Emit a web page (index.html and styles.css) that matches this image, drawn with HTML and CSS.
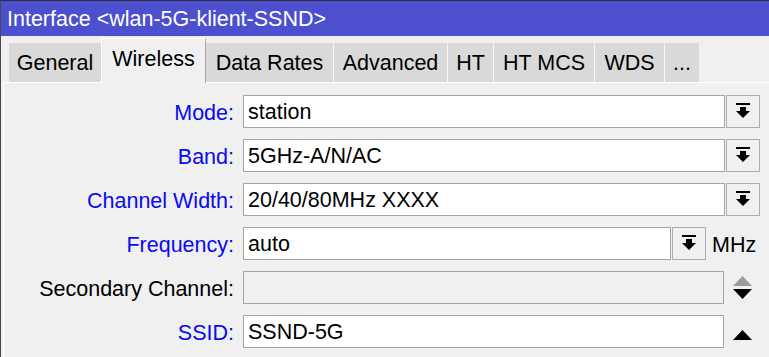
FILE: index.html
```html
<!DOCTYPE html>
<html>
<head>
<meta charset="utf-8">
<link rel="stylesheet" href="styles.css">
</head>
<body>
<div class="window">
  <div class="titlebar">Interface &lt;wlan-5G-klient-SSND&gt;</div>
  <div class="tabs">
    <div class="tab t-general">General</div>
    <div class="tab active t-wireless">Wireless</div>
    <div class="tab t-rates">Data Rates</div>
    <div class="tab t-adv">Advanced</div>
    <div class="tab t-ht">HT</div>
    <div class="tab t-mcs">HT MCS</div>
    <div class="tab t-wds">WDS</div>
    <div class="tab t-more">...</div>
  </div>
  <div class="panel">
    <div class="row">
      <div class="label req">Mode:</div>
      <div class="field">station</div>
      <div class="btn"><svg class="dd" width="14" height="15" viewBox="0 0 14 15"><rect x="0" y="0" width="14" height="2"/><rect x="4" y="4" width="6" height="4"/><polygon points="0,8 14,8 7,15"/></svg></div>
    </div>
    <div class="row">
      <div class="label req">Band:</div>
      <div class="field">5GHz-A/N/AC</div>
      <div class="btn"><svg class="dd" width="14" height="15" viewBox="0 0 14 15"><rect x="0" y="0" width="14" height="2"/><rect x="4" y="4" width="6" height="4"/><polygon points="0,8 14,8 7,15"/></svg></div>
    </div>
    <div class="row">
      <div class="label req">Channel Width:</div>
      <div class="field">20/40/80MHz XXXX</div>
      <div class="btn"><svg class="dd" width="14" height="15" viewBox="0 0 14 15"><rect x="0" y="0" width="14" height="2"/><rect x="4" y="4" width="6" height="4"/><polygon points="0,8 14,8 7,15"/></svg></div>
    </div>
    <div class="row">
      <div class="label req">Frequency:</div>
      <div class="field">auto</div>
      <div class="btn"><svg class="dd" width="14" height="15" viewBox="0 0 14 15"><rect x="0" y="0" width="14" height="2"/><rect x="4" y="4" width="6" height="4"/><polygon points="0,8 14,8 7,15"/></svg></div>
      <div class="unit">MHz</div>
    </div>
    <div class="row">
      <div class="label">Secondary Channel:</div>
      <div class="field disabled"></div>
      <div class="spin">
        <svg width="19" height="23" viewBox="0 0 19 23"><polygon class="up-gray" points="0,10 9.5,0 19,10"/><polygon points="0,13 19,13 9.5,23"/></svg>
      </div>
    </div>
    <div class="row">
      <div class="label req">SSID:</div>
      <div class="field">SSND-5G</div>
      <div class="spin spin-up">
        <svg width="19" height="10" viewBox="0 0 19 10"><polygon points="0,10 9.5,0 19,10"/></svg>
      </div>
    </div>
  </div>
</div>
</body>
</html>
```

FILE: styles.css
```css
* { box-sizing: border-box; }

html, body {
  margin: 0;
  padding: 0;
  background: #f0f0f0;
}

body {
  font-family: "Liberation Sans", Arial, sans-serif;
  font-size: 21.5px;
  color: #000;
}

.window {
  width: 769px;
  height: 357px;
  border-top: 1px solid #2e2e3a;
  border-left: 1px solid #4a4a4a;
  background: #f0f0f0;
  overflow: hidden;
}

.titlebar {
  height: 35px;
  background: #4c4fce;
  color: #fff;
  line-height: 35px;
  padding-left: 6px;
  padding-top: 1px;
  white-space: nowrap;
}

.tabs {
  height: 46px;
  display: flex;
  align-items: flex-end;
  padding-left: 8px;
}

.tab {
  height: 39px;
  line-height: 24px;
  padding-top: 8px;
  text-align: center;
  background: #d9d9d9;
  border-left: 1px solid #f7f7f7;
  white-space: nowrap;
}

.tab.active {
  height: 45px;
  margin-bottom: -1px;
  padding-top: 8px;
  background: #f0f0f0;
  border-top: 1px solid #ffffff;
  border-left: 1px solid #ffffff;
  border-right: 1px solid #a8a8a8;
  position: relative;
  z-index: 1;
}

.t-general { width: 92px; border-left: none; }
.t-wireless { width: 105px; }
.t-rates { width: 127px; border-left: none; }
.t-adv { width: 114px; }
.t-ht { width: 46px; }
.t-mcs { width: 101px; }
.t-wds { width: 70px; }
.t-more { width: 35px; }

.panel {
  margin-left: 2px;
  border-top: 1px solid #ffffff;
  border-left: 1px solid #ffffff;
  padding: 12px 9px 0 0;
  height: 275px;
}

.row {
  display: flex;
  align-items: center;
  height: 33px;
  margin-bottom: 11px;
}

.label {
  width: 230px;
  margin-right: 9px;
  text-align: right;
  white-space: nowrap;
  line-height: 24px;
  padding-top: 2px;
}

.label.req { color: #0a0af0; }

.field {
  flex: 1;
  height: 33px;
  border: 1px solid #a5a5a5;
  background: #fff;
  line-height: 31px;
  padding-left: 4px;
  padding-top: 1px;
  white-space: nowrap;
}

.field.disabled { background: #f0f0f0; }

.btn {
  width: 34px;
  height: 33px;
  margin-left: 1px;
  border: 1px solid #adadad;
  background: #f0f0f0;
  display: flex;
  justify-content: center;
  align-items: flex-start;
  padding-top: 7px;
}

.dd { display: block; fill: #000; }

.unit {
  width: 54px;
  padding-left: 6px;
  line-height: 24px;
  padding-top: 2px;
  white-space: nowrap;
}

.spin {
  width: 36px;
  height: 33px;
  display: flex;
  justify-content: center;
  align-items: center;
}

.spin svg { display: block; fill: #000; }
.spin .up-gray { fill: #999e99; }

.spin-up { padding-top: 6px; }
```
